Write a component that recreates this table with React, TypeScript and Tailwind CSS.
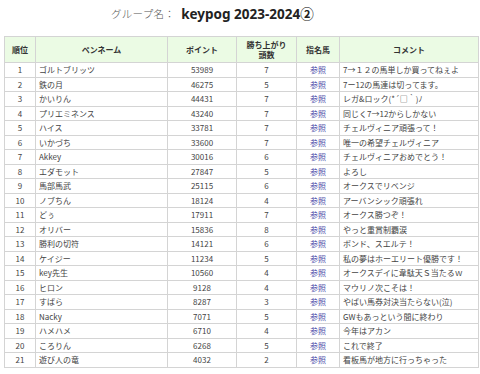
const ROWS: [number, string, number, number, string][] = [
  [1, 'ゴルトブリッツ', 53989, 7, '7→１２の馬単しか買ってねぇよ'],
  [2, '鉄の月', 46275, 5, '7ー12の馬連は切ってます。'],
  [3, 'かいりん', 44431, 7, 'レガ&ロック(*´□｀)ﾉ'],
  [4, 'プリエミネンス', 43240, 7, '同じく7→12からしかない'],
  [5, 'ハイス', 33781, 7, 'チェルヴィニア頑張って！'],
  [6, 'いかづち', 33600, 7, '唯一の希望チェルヴィニア'],
  [7, 'Akkey', 30016, 6, 'チェルヴィニアおめでとう！'],
  [8, 'エダモット', 27847, 5, 'よろし'],
  [9, '馬部馬武', 25115, 6, 'オークスでリベンジ'],
  [10, 'ノブちん', 18124, 4, 'アーバンシック頑張れ'],
  [11, 'どぅ', 17911, 7, 'オークス勝つぞ！'],
  [12, 'オリバー', 15836, 8, 'やっと重賞制覇涙'],
  [13, '勝利の切符', 14121, 6, 'ボンド、スエルテ！'],
  [14, 'ケイジー', 11234, 5, '私の夢はホーエリート優勝です！'],
  [15, 'key先生', 10560, 4, 'オークスデイに韋駄天Ｓ当たるｗ'],
  [16, 'ヒロン', 9128, 4, 'マウリノ次こそは！'],
  [17, 'すぱら', 8287, 3, 'やばい馬券対決当たらない(泣)'],
  [18, 'Nacky', 7071, 5, 'GWもあっという間に終わり'],
  [19, 'ハメハメ', 6710, 4, '今年はアカン'],
  [20, 'ころりん', 6268, 5, 'これで終了'],
  [21, '遊び人の竜', 4032, 2, '看板馬が地方に行っちゃった'],
];

const cell = 'border border-[#d4d4d4] px-[3px] h-[14.5px] leading-[13px] whitespace-nowrap overflow-hidden';
const head = 'border border-[#d4d4d4] bg-[#ebfbe4] font-bold text-[8px] leading-[10px] text-[#333]';

export default function App() {
  return (
    <div className="w-[480px] h-[374px] bg-white overflow-hidden text-[#444] [font-family:'Noto_Sans_CJK_JP','Noto_Sans',sans-serif]">
      <div className="h-[36px] flex items-center pl-[111px] pb-[8px]">
        <span className="text-[10.5px] text-[#555] font-light tracking-[0.3px]">グループ名：</span>
        <span className="ml-[6px] text-[13.5px] font-bold text-[#222] [font-family:'Noto_Sans','Noto_Sans_CJK_JP',sans-serif]">keypog 2023-2024②</span>
      </div>
      <table className="ml-[4px] w-[474px] table-fixed border-collapse text-[8px]">
        <colgroup>
          <col className="w-[31px]" />
          <col className="w-[132px]" />
          <col className="w-[69px]" />
          <col className="w-[60px]" />
          <col className="w-[43px]" />
          <col className="w-[139px]" />
        </colgroup>
        <thead>
          <tr className="h-[26px]">
            <th className={head}>順位</th>
            <th className={head}>ペンネーム</th>
            <th className={head}>ポイント</th>
            <th className={head}>勝ち上がり<br />頭数</th>
            <th className={head}>指名馬</th>
            <th className={head}>コメント</th>
          </tr>
        </thead>
        <tbody>
          {ROWS.map(([rank, name, pt, wins, comment]) => (
            <tr key={rank}>
              <td className={`${cell} text-center`}>{rank}</td>
              <td className={`${cell} text-left`}>{name}</td>
              <td className={`${cell} text-center`}>{pt}</td>
              <td className={`${cell} text-center`}>{wins}</td>
              <td className={`${cell} text-center text-[#4a4aa8]`}>参照</td>
              <td className={`${cell} text-left`}>{comment}</td>
            </tr>
          ))}
        </tbody>
      </table>
    </div>
  );
}
